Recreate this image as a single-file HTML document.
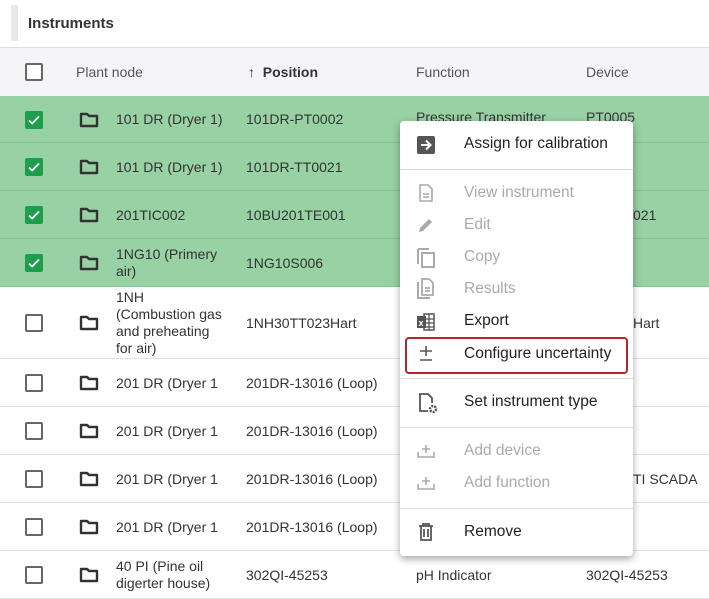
<!DOCTYPE html>
<html><head><meta charset="utf-8"><style>
*{margin:0;padding:0;box-sizing:border-box}
body{width:709px;height:597px;overflow:hidden;background:#fff;font-family:"Liberation Sans",sans-serif;font-size:14px;color:#333;position:relative}
.a{position:absolute}
.title{left:11px;top:5px;width:7px;height:36px;background:#e8e8ea}
.row{position:absolute;left:0;width:709px;border-bottom:1px solid #e2e2e2}
.g{background:#97d1a4;border-bottom:1px solid #86c294}
.cb{position:absolute;left:25px;width:18px;height:18px;border:2px solid #666;border-radius:2px;background:#fff}
.cbc{background:#1c9e4c;border:none}
.fold{position:absolute;left:79px}
.t{position:absolute;line-height:17px}
.menu{position:absolute;left:400px;top:121px;width:233px;height:435px;background:#fff;border-radius:4px;box-shadow:0 3px 8px rgba(0,0,0,.35)}
.mi{position:absolute;left:64px;font-size:15.5px;color:#222;line-height:18px}
.dis{color:#aaa}
.dv{position:absolute;left:0;width:233px;height:1px;background:#ddd}
.ic{position:absolute;left:16px}
</style></head><body>
<div class="a title"></div>
<div class="a" style="left:28px;top:15px;font-size:15px;font-weight:bold;color:#333">Instruments</div>
<div class="row" style="top:47px;height:49px;background:#f5f5f7;border-top:1px solid #ddd;border-bottom:none"></div>
<div class="cb" style="top:63px"></div>
<div class="t" style="left:76px;top:64px;color:#555">Plant node</div>
<div class="t" style="left:248px;top:64px;font-weight:bold;color:#333">↑&nbsp; Position</div>
<div class="t" style="left:416px;top:64px;color:#555">Function</div>
<div class="t" style="left:586px;top:64px;color:#555">Device</div>

<div id="rows"></div>
<script>
var R=[
[96,47,1,"101 DR (Dryer 1)","101DR-PT0002","Pressure Transmitter","PT0005",-2,586],
[143,48,1,"101 DR (Dryer 1)","101DR-TT0021","","",0,586],
[191,48,1,"201TIC002","10BU201TE001","","021",0,633],
[239,48,1,"1NG10 (Primery<br>air)","1NG10S006","","",0,586],
[287,72,0,"1NH<br>(Combustion gas<br>and preheating<br>for air)","1NH30TT023Hart","","Hart",0,633],
[359,48,0,"201 DR (Dryer 1","201DR-13016 (Loop)","","",0,586],
[407,48,0,"201 DR (Dryer 1","201DR-13016 (Loop)","","",0,586],
[455,48,0,"201 DR (Dryer 1","201DR-13016 (Loop)","","TI SCADA",0,633],
[503,48,0,"201 DR (Dryer 1","201DR-13016 (Loop)","","",0,586],
[551,48,0,"40 PI (Pine oil<br>digerter house)","302QI-45253","pH Indicator","302QI-45253",0,586]];
var h="";
R.forEach(function(r){var c=r[0]+r[1]/2;
h+='<div class="row'+(r[2]?' g':'')+'" style="top:'+r[0]+'px;height:'+r[1]+'px"></div>';
h+='<div class="cb'+(r[2]?' cbc':'')+'" style="top:'+(c-9)+'px">'+(r[2]?'<svg width="18" height="18" viewBox="0 0 18 18"><path d="M4 9.5l3.2 3L14 5.5" stroke="#fff" stroke-width="1.8" fill="none"/></svg>':'')+'</div>';
h+='<svg class="fold" style="top:'+(c-9)+'px" width="20" height="18" viewBox="0 0 20 18"><path d="M2 3h6l2 2h8v10H2z" fill="none" stroke="#333" stroke-width="2.4" stroke-linejoin="round"/></svg>';
var n=(r[3].match(/<br>/g)||[]).length+1;
h+='<div class="t" style="left:116px;top:'+(c-n*8.5)+'px">'+r[3]+'</div>';
h+='<div class="t" style="left:246px;top:'+(c-8.5)+'px">'+r[4]+'</div>';
if(r[5])h+='<div class="t" style="left:416px;top:'+(c-8.5+r[7])+'px">'+r[5]+'</div>';
if(r[6])h+='<div class="t" style="left:'+r[8]+'px;top:'+(c-8.5+r[7])+'px">'+r[6]+'</div>';
});
document.getElementById("rows").innerHTML=h;
</script>

<div class="menu">
<svg class="ic" style="top:14px" width="20" height="20" viewBox="0 0 20 20"><rect x="1" y="1" width="18" height="18" rx="2" fill="#555"/><path d="M5 10h9M10 5.5l4.5 4.5L10 14.5" stroke="#fff" stroke-width="2" fill="none"/></svg>
<div class="mi" style="top:14px">Assign for calibration</div>
<div class="dv" style="top:48px"></div>
<svg class="ic" style="top:62px" width="20" height="20" viewBox="0 0 20 20"><path d="M4 2h8l4 4v12H4z M7 11h6M7 14h6" fill="none" stroke="#aaa" stroke-width="1.6"/></svg>
<div class="mi dis" style="top:63px">View instrument</div>
<svg class="ic" style="top:94px" width="20" height="20" viewBox="0 0 20 20"><path d="M3 17l1-4 9-9 3 3-9 9z" fill="#aaa"/></svg>
<div class="mi dis" style="top:95px">Edit</div>
<svg class="ic" style="top:126px" width="20" height="22" viewBox="0 0 20 22"><path d="M2 2v15M2 2h11" stroke="#aaa" stroke-width="2" fill="none"/><rect x="6" y="6" width="12" height="14" fill="none" stroke="#aaa" stroke-width="2"/></svg>
<div class="mi dis" style="top:127px">Copy</div>
<svg class="ic" style="top:157px" width="20" height="22" viewBox="0 0 20 22"><path d="M2 4v16h12" stroke="#aaa" stroke-width="2" fill="none"/><path d="M6 1h7l4 4v12H6z M9 10h5M9 13h5" fill="none" stroke="#aaa" stroke-width="1.8"/></svg>
<div class="mi dis" style="top:159px">Results</div>
<svg class="ic" style="top:191px" width="20" height="20" viewBox="0 0 20 20"><rect x="1" y="4" width="9" height="12" fill="#555"/><text x="2.5" y="14" font-size="9" fill="#fff" font-family="Liberation Sans" font-weight="bold">x</text><rect x="8" y="2" width="10" height="16" fill="none" stroke="#555" stroke-width="1.5"/><path d="M8 7h10M8 11h10M8 15h10M13 2v16" stroke="#555" stroke-width="1.3"/></svg>
<div class="mi" style="top:191px">Export</div>
<div class="a" style="left:5px;top:216px;width:223px;height:37px;border:2px solid #b3262b;border-radius:4px"></div>
<svg class="ic" style="top:222px" width="20" height="20" viewBox="0 0 20 20"><path d="M4 8h12M10 3v10M4 17h12" stroke="#555" stroke-width="1.6"/></svg>
<div class="mi" style="top:224px">Configure uncertainty</div>
<div class="dv" style="top:257px"></div>
<svg class="ic" style="top:271px" width="22" height="22" viewBox="0 0 22 22"><path d="M12 19H4V2h8l4 4v5" fill="none" stroke="#555" stroke-width="1.8"/><circle cx="17" cy="17" r="3" fill="none" stroke="#555" stroke-width="2.4" stroke-dasharray="2 1"/></svg>
<div class="mi" style="top:272px">Set instrument type</div>
<div class="dv" style="top:306px"></div>
<svg class="ic" style="top:320px" width="20" height="20" viewBox="0 0 20 20"><path d="M2 11v5h16v-5M10 4v8M6 8h8" stroke="#aaa" stroke-width="1.6" fill="none"/></svg>
<div class="mi dis" style="top:321px">Add device</div>
<svg class="ic" style="top:352px" width="20" height="20" viewBox="0 0 20 20"><path d="M2 11v5h16v-5M10 4v8M6 8h8" stroke="#aaa" stroke-width="1.6" fill="none"/></svg>
<div class="mi dis" style="top:353px">Add function</div>
<div class="dv" style="top:387px"></div>
<svg class="ic" style="top:401px" width="20" height="20" viewBox="0 0 20 20"><path d="M3 4h14M7 4V2h6v2M5 4v14h10V4M8 7v8M12 7v8" stroke="#555" stroke-width="1.8" fill="none"/></svg>
<div class="mi" style="top:402px">Remove</div>
</div>
</body></html>
